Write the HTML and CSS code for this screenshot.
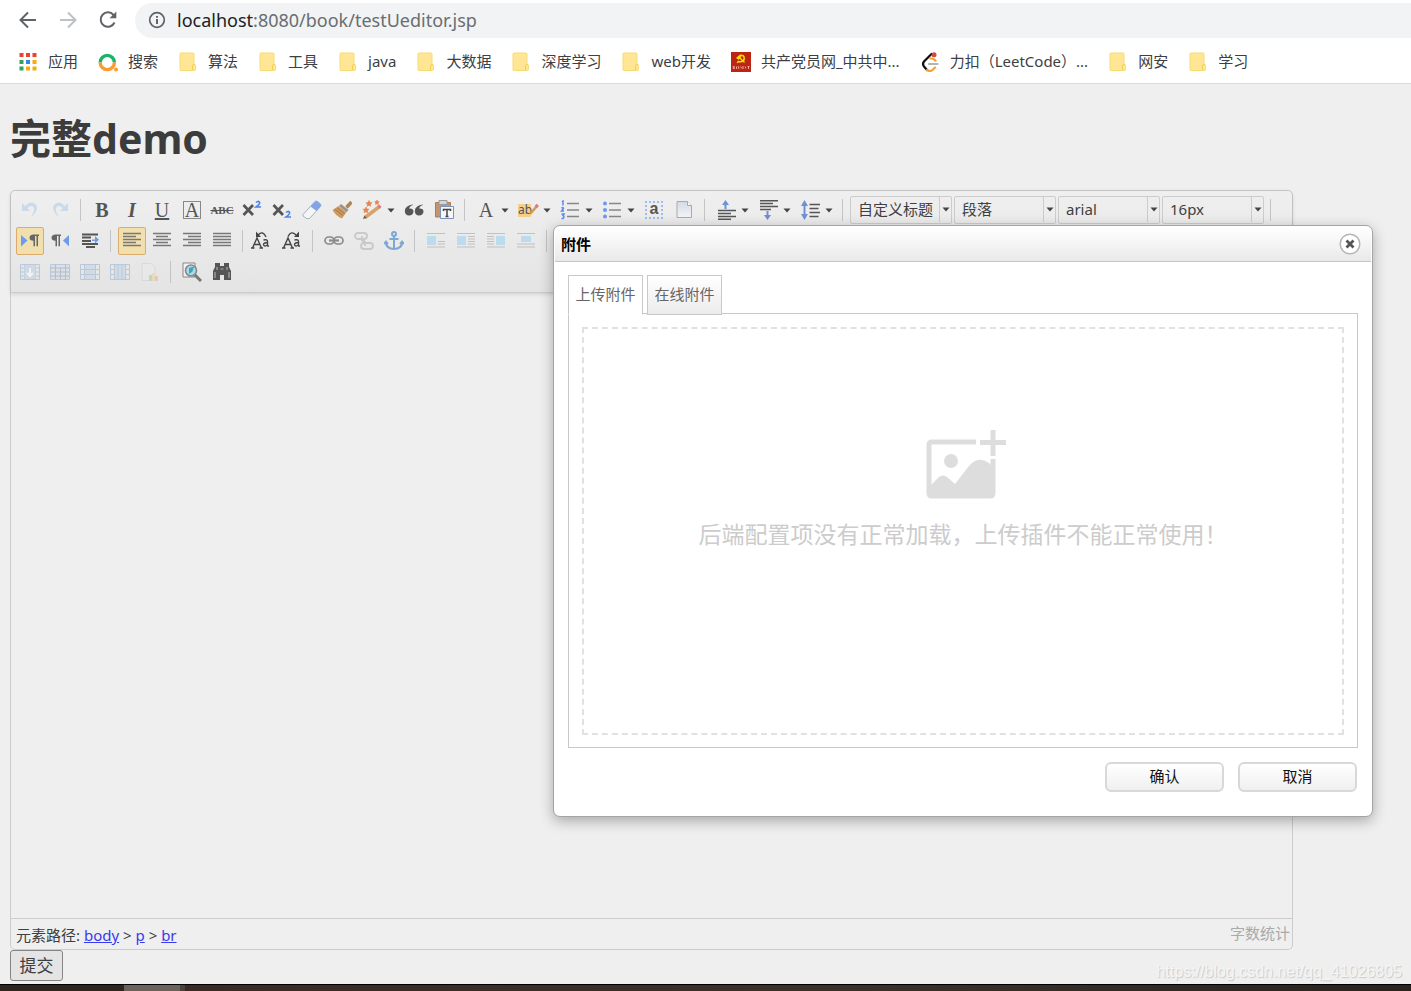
FILE: index.html
```html
<!DOCTYPE html>
<html lang="zh-CN">
<head>
<meta charset="utf-8">
<title>完整demo</title>
<link rel="stylesheet" href="styles.css">
</head>
<body>
<svg class="defs" aria-hidden="true">
  <defs>
    <linearGradient id="sheet" x1="0" y1="0" x2="0" y2="1"><stop offset="0" stop-color="#d4dbe6"/><stop offset="1" stop-color="#f3f4f6"/></linearGradient>
  </defs>
  <symbol id="folder" viewBox="0 0 20 20"><path d="M3 1h12q1 0 1 1v10.500h.5q1 0 1 1v4q0 1-1 1H3q-1 0-1-1V2q0-1 1-1z" fill="#ffe694" stroke="#f7db74"/><path d="M14.500 18v-4q0-1.500 1.200-1.500h1.300" fill="none" stroke="#f3cf55"/></symbol>
  <symbol id="arrow" viewBox="0 0 8 5"><path d="M.5.5h7L4 4.500z" fill="#444"/></symbol>
</svg>

<header class="browser">
  <div class="address-row">
    <button class="nav" aria-label="后退"><svg width="20" height="20" viewBox="0 0 20 20" fill="none" stroke="#5f6368" stroke-width="2"><path d="M18 10H3M10 2.500L2.500 10l7.500 7.500"/></svg></button>
    <button class="nav" aria-label="前进"><svg width="20" height="20" viewBox="0 0 20 20" fill="none" stroke="#bdc0c4" stroke-width="2"><path d="M2 10h15M10 2.500l7.500 7.500-7.500 7.500"/></svg></button>
    <button class="nav" aria-label="刷新"><svg width="20" height="20" viewBox="0 0 20 20" fill="none" stroke="#5f6368" stroke-width="2"><path d="M16.500 12.500A7.200 7.200 0 1 1 15.500 5"/><path d="M18.300 1.500v6.800h-6.800z" fill="#5f6368" stroke="none"/></svg></button>
    <div class="omnibox">
      <svg width="18" height="18" viewBox="0 0 18 18" fill="none" stroke="#5f6368" stroke-width="1.700"><circle cx="9" cy="9" r="7.300"/><path d="M9 8v5M9 5v1.800" stroke-width="2"/></svg>
      <span class="url"><span class="host">localhost</span>:8080/book/testUeditor.jsp</span>
    </div>
  </div>
  <nav class="bookmarks">
    <a href="#"><svg class="bm" viewBox="0 0 20 20"><path d="M1.500 1h4v4h-4zM8 1h4v4H8zM14.500 1h4v4h-4z" fill="#ea4335"/><path d="M1.500 8h4v4h-4zM1.500 14.500h4v4h-4z" fill="#34a35a"/><path d="M8 8h4v4H8z" fill="#2f86f0"/><path d="M14.500 8h4v4h-4zM14.500 14.500h4v4h-4zM8 14.500h4v4H8z" fill="#fbab07"/></svg><span>应用</span></a>
    <a href="#"><svg class="bm" viewBox="0 0 20 20" fill="none" stroke-width="3.400"><path d="M2.200 10.500a7.100 7.100 0 0 1 14.200 0" stroke="#19b36b"/><path d="M2.200 10.500a7.100 7.100 0 0 0 14.200 0" stroke="#ff9a2e"/><circle cx="18" cy="17.500" r="2" fill="#ff9a2e" stroke="none"/></svg><span>搜索</span></a>
    <a href="#"><svg class="bm"><use href="#folder"/></svg><span>算法</span></a>
    <a href="#"><svg class="bm"><use href="#folder"/></svg><span>工具</span></a>
    <a href="#"><svg class="bm"><use href="#folder"/></svg><span>java</span></a>
    <a href="#"><svg class="bm"><use href="#folder"/></svg><span>大数据</span></a>
    <a href="#"><svg class="bm"><use href="#folder"/></svg><span>深度学习</span></a>
    <a href="#"><svg class="bm"><use href="#folder"/></svg><span>web开发</span></a>
    <a href="#"><svg class="bm" viewBox="0 0 20 20"><path d="M0 0h20v20H0z" fill="#bd2413"/><path d="M9 3.200q4.500-.5 4.200 3.800Q12.500 10.500 7 9.500" fill="none" stroke="#ffe100" stroke-width="1.500"/><path d="M6 6l2.700-2.500 1 1L7.500 7zM8.500 5.500l5 5M6 10.800L8 9" fill="#ffe100" stroke="#ffe100" stroke-width="1.200"/><path d="M2 14l1.500 3M3.500 14L2 17M5.500 14.500v2.500M7 14l1 3M9.500 14.500l1.500 2M12 14v3M14 14.500l1 2M16.500 14.500h2M17.500 14v3" stroke="#f2b9ae" stroke-width=".9"/></svg><span>共产党员网_中共中...</span></a>
    <a href="#"><svg class="bm" viewBox="0 0 20 20" fill="none" stroke-linecap="round" stroke-width="2.200"><path d="M11.500 2L4 9.500q-2 2.500 0 5L7 18" stroke="#111"/><path d="M10.500 6.500l2.500.2 2.500 2M7 18q3 2 5.500 0l2.500-2.500" stroke="#f5a030"/><path d="M9 12h8.500" stroke="#b3b3b3"/><circle cx="14" cy="2.800" r="2.500" fill="#d74545" stroke="none"/></svg><span>力扣（LeetCode）...</span></a>
    <a href="#"><svg class="bm"><use href="#folder"/></svg><span>网安</span></a>
    <a href="#"><svg class="bm"><use href="#folder"/></svg><span>学习</span></a>
  </nav>
</header>

<main class="page">
  <h1>完整demo</h1>
  <section class="editor">
    <div class="toolbar">
      <div class="tools">
        <button class="tool off" aria-label="撤销"><svg viewBox="0 0 20 20"><path d="M2 3v8h8L7.300 8.300q3.500-3.500 6-1.500 2.500 3-2.500 10.500Q18.500 11 16.500 5.500 12-.5 5 6z" fill="#a8c9e6"/></svg></button>
        <button class="tool off" aria-label="重做"><svg viewBox="0 0 20 20"><path d="M18 3v8h-8l2.700-2.700q-3.500-3.500-6-1.500-2.500 3 2.500 10.500Q1.500 11 3.500 5.500 8-.5 15 6z" fill="#a8c9e6"/></svg></button>
        <span class="sep"></span>
        <button class="tool serif bold" aria-label="加粗">B</button>
        <button class="tool serif bold italic" aria-label="斜体">I</button>
        <button class="tool serif under" aria-label="下划线">U</button>
        <button class="tool serif" aria-label="字符边框"><span class="boxed">A</span></button>
        <button class="tool serif strike" aria-label="删除线">ABC</button>
        <button class="tool" aria-label="上标"><svg viewBox="0 0 20 20" fill="none"><path d="M1.500 5l9.500 10M11 5L1.500 15" stroke="#555" stroke-width="2.700"/><path d="M14 2.500q2-2 3.500-.3 1 1.500-3.500 4.800h5" stroke="#4d82e8" stroke-width="1.600"/></svg></button>
        <button class="tool" aria-label="下标"><svg viewBox="0 0 20 20" fill="none"><path d="M1.500 5l9.500 10M11 5L1.500 15" stroke="#555" stroke-width="2.700"/><path d="M14 12.500q2-2 3.500-.3 1 1.500-3.500 4.800h5" stroke="#4d82e8" stroke-width="1.600"/></svg></button>
        <button class="tool" aria-label="清除格式"><svg viewBox="0 0 20 20"><path d="M1 14.500L13 1.500q1-1 2.500 0l3 2.500q1 1 0 2.500L7.500 18.500h-3L1 16z" fill="#f4f5f7" stroke="#aab0ba"/><path d="M8.500 6.500L13 1.500q1-1 2.500 0l3 2.500q1 1 0 2.500L14.500 11z" fill="#7fa5e6"/></svg></button>
        <button class="tool" aria-label="格式刷"><svg viewBox="0 0 20 20"><path d="M19.500 2l-5 5.500" stroke="#b08457" stroke-width="3.500"/><path d="M9 4l7.500 6-2 2L7 6z" fill="#9a9287"/><path d="M6.500 6l8 6-4.500 6.500Q4 16.500.5 10z" fill="#cf9b62"/><path d="M3 9.500l8 6M5 8l7.500 5.500" stroke="#a5713f"/></svg></button>
        <button class="tool split" aria-label="自动排版"><svg viewBox="0 0 20 20"><path d="M3 17.500L17 7" stroke="#d6a368" stroke-width="3.500"/><path d="M15 6l2.500 3 2-2-2-2.500z" fill="#dd7a7e"/><path d="M1 19l1.500-3.500 2 2.500z" fill="#555"/><path d="M7 .5l1 2 2 .3-1.500 1.500.3 2L7 5.300l-2 1 .4-2L4 2.800l2-.3zM15 0l.7 1.500 1.600.2-1.200 1.200.3 1.600-1.400-.7-1.500.7.3-1.600-1.100-1.200 1.600-.2zM4 7l1 2 2 .3-1.500 1.500.3 2L4 11.800l-2 1 .4-2L1 9.300 3 9z" fill="#e8824e" stroke="#e8824e" stroke-width=".6"/></svg><svg class="caret"><use href="#arrow"/></svg></button>
        <button class="tool" aria-label="引用"><svg viewBox="0 0 20 20" fill="#555"><path d="M9 5Q5.500 6 5.200 8.500 9.500 8.300 9.500 11.800 9 15.500 5 15.500 1 15.300.8 11 1 5.500 9 4.500zM19 5q-3.500 1-3.800 3.500 4.300-.2 4.300 3.300-.5 3.700-4.500 3.700-4-.2-4.200-4.500.2-5.500 8.200-6.500z"/></svg></button>
        <button class="tool" aria-label="纯文本粘贴模式"><svg viewBox="0 0 20 20"><path d="M1.500 2.500h15V17h-15z" fill="#c4946e" stroke="#a87e5c"/><path d="M5 .5h8v4H5z" fill="#d5d5d5" stroke="#999"/><path d="M6.500 6.500h13v12h-13z" fill="#f5f6f9" stroke="#7d92ba"/><path d="M9.500 11V9.500h7V11M13 9.500v7M11.500 16.500h3" fill="none" stroke="#444" stroke-width="1.500"/></svg></button>
        <span class="sep"></span>
        <button class="tool split serif" aria-label="字体颜色"><span>A</span><svg class="caret"><use href="#arrow"/></svg></button>
        <button class="tool split" aria-label="背景色"><span class="mark">ab<svg viewBox="0 0 10 16"><path d="M1 12L8 4" stroke="#d29a52" stroke-width="2.500"/><path d="M6.500 3l2.500 2" stroke="#dd7a7e" stroke-width="3"/></svg></span><svg class="caret"><use href="#arrow"/></svg></button>
        <button class="tool split" aria-label="有序列表"><svg viewBox="0 0 20 20" fill="none"><path d="M7 3.500h12M7 10h12M7 16.500h12" stroke="#888" stroke-width="1.300"/><path d="M2 2l1-1v4.500M1.500 8q2-1 2 .5L1.500 11H4M1.500 14H4l-1 1.500q2 1 0 3H1.500" stroke="#5b8af0" stroke-width="1.500"/></svg><svg class="caret"><use href="#arrow"/></svg></button>
        <button class="tool split" aria-label="无序列表"><svg viewBox="0 0 20 20"><path d="M7 3.500h12M7 10h12M7 16.500h12" stroke="#888" stroke-width="1.300"/><g fill="#6f98f0"><circle cx="3" cy="3.500" r="2"/><circle cx="3" cy="10" r="2"/><circle cx="3" cy="16.500" r="2"/></g></svg><svg class="caret"><use href="#arrow"/></svg></button>
        <button class="tool" aria-label="全选"><span class="all">a</span></button>
        <button class="tool" aria-label="清空文档"><svg viewBox="0 0 20 20"><path d="M3 1.500h10.500l4 4v12H3z" fill="url(#sheet)" stroke="#aaa"/><path d="M13.500 1.500v4h4" fill="#fff" stroke="#aaa"/></svg></button>
        <span class="sep"></span>
        <button class="tool split" aria-label="段前距"><svg viewBox="0 0 20 20"><path d="M2 10.500h18M2 13.500h13M2 16.500h18M2 19.300h13" stroke="#555" stroke-width="1.400"/><path d="M8.500 9V5H6l3.500-5L13 5h-2.500v4z" fill="#6d91d4"/></svg><svg class="caret"><use href="#arrow"/></svg></button>
        <button class="tool split" aria-label="段后距"><svg viewBox="0 0 20 20"><path d="M2 .700h18M2 3.500h13M2 6.500h18M2 9.500h11" stroke="#555" stroke-width="1.400"/><path d="M8.500 11v4H6l3.500 5 3.500-5h-2.500v-4z" fill="#6d91d4"/></svg><svg class="caret"><use href="#arrow"/></svg></button>
        <button class="tool split" aria-label="行间距"><svg viewBox="0 0 20 20"><path d="M9.500 4.500h10.500M9.500 8.500h9M9.500 12.500h10.500M9.500 16.500h9" stroke="#555" stroke-width="1.400"/><path d="M4.500 0L8 6H5.500v8H8l-3.500 6L1 14h2.500V6H1z" fill="#6d91d4"/></svg><svg class="caret"><use href="#arrow"/></svg></button>
        <span class="sep"></span>
        <label class="combo"><select aria-label="自定义标题"><option>自定义标题</option></select><span class="drop"><svg class="caret"><use href="#arrow"/></svg></span></label>
        <label class="combo"><select aria-label="段落格式"><option>段落</option></select><span class="drop"><svg class="caret"><use href="#arrow"/></svg></span></label>
        <label class="combo"><select aria-label="字体"><option>arial</option></select><span class="drop"><svg class="caret"><use href="#arrow"/></svg></span></label>
        <label class="combo"><select aria-label="字号"><option>16px</option></select><span class="drop"><svg class="caret"><use href="#arrow"/></svg></span></label>
        <span class="sep"></span>
      </div>
      <div class="tools">
        <button class="tool active" aria-label="从左向右输入"><svg viewBox="0 0 20 20"><path d="M1 4l6.500 5.500L1 15.500z" fill="#6f9bec"/><path d="M19 3.500h-5.500q-4 .3-4 3.200t4 3v5.500h1.500V5h1.500v10.200H18V5h1z" fill="#666"/></svg></button>
        <button class="tool" aria-label="从右向左输入"><svg viewBox="0 0 20 20"><path d="M19 4l-6 5.500 6 6z" fill="#6f9bec"/><path d="M11 3.500H5.500q-4 .3-4 3.200t4 3v5.500H7V5h1.500v10.200H10V5h1z" fill="#666"/></svg></button>
        <button class="tool" aria-label="首行缩进"><svg viewBox="0 0 20 20"><path d="M2 3.500h16M2 6.500h9M2 10h9M2 13h16M6 16h9" stroke="#555" stroke-width="1.800"/><path d="M12 8.500h3V5l4 3.800-4 3.700V10h-3z" fill="#6f9bec"/></svg></button>
        <span class="sep"></span>
        <button class="tool active" aria-label="居左对齐"><svg viewBox="0 0 20 20"><path d="M1 2.500h18M1 5.500h13M1 8.500h18M1 11.500h13M1 14.500h18" stroke="#777" stroke-width="1.300"/></svg></button>
        <button class="tool" aria-label="居中对齐"><svg viewBox="0 0 20 20"><path d="M1 2.500h18M4 5.500h12M1 8.500h18M4 11.500h12M1 14.500h18" stroke="#777" stroke-width="1.300"/></svg></button>
        <button class="tool" aria-label="居右对齐"><svg viewBox="0 0 20 20"><path d="M1 2.500h18M6 5.500h13M1 8.500h18M6 11.500h13M1 14.500h18" stroke="#777" stroke-width="1.300"/></svg></button>
        <button class="tool" aria-label="两端对齐"><svg viewBox="0 0 20 20"><path d="M1 2.500h18M1 5.500h18M1 8.500h18M1 11.500h18M1 14.500h18" stroke="#777" stroke-width="1.300"/></svg></button>
        <span class="sep tight"></span>
        <button class="tool case" aria-label="字母大写"><svg viewBox="0 0 20 20" fill="none" stroke="#444" stroke-width="1.400"><path d="M1.500 17L6 7l4.500 10M3.500 13.500h5M0 17h3.500M8.500 17h3.500M12.500 9q4-1 4 1.500v4q0 .7 1.500.5M16.500 11.500q-4 0-4 2.200 1 2.500 4 .3M7 4q5-5 8 2"/><path d="M5 .5V6h5z" fill="#444" stroke="none"/></svg></button>
        <button class="tool case" aria-label="字母小写"><svg viewBox="0 0 20 20" fill="none" stroke="#444" stroke-width="1.400"><path d="M1.500 17L6 7l4.500 10M3.500 13.500h5M0 17h3.500M8.500 17h3.500M12.500 9q4-1 4 1.500v4q0 .7 1.500.5M16.500 11.500q-4 0-4 2.200 1 2.500 4 .3M6 5.500q3-6.500 8-1.500"/><path d="M17 .5V6h-5z" fill="#444" stroke="none"/></svg></button>
        <span class="sep"></span>
        <button class="tool" aria-label="超链接"><svg viewBox="0 0 20 20" fill="none" stroke="#8b8b8b" stroke-width="1.700"><rect x="1" y="6" width="9" height="7" rx="3.500"/><rect x="10" y="6" width="9" height="7" rx="3.500"/><path d="M5 9.500h10" stroke-width="2.200"/></svg></button>
        <button class="tool off" aria-label="取消链接"><svg viewBox="0 0 20 20" fill="none" stroke="#aaa" stroke-width="1.800"><rect x="1" y="2" width="12" height="6" rx="3"/><rect x="7" y="12" width="12" height="6" rx="3"/><path d="M8 5v4h3M11 15v-4H8"/></svg></button>
        <button class="tool" aria-label="锚点"><svg viewBox="0 0 20 20" fill="none" stroke="#7ea7d6" stroke-width="2"><circle cx="10" cy="3" r="2"/><path d="M10 5v13M5.500 8h9M1.500 11q1 7 8.500 7t8.500-7M0 13l2-2.500L4 13M16 13l2-2.500 2 2.500"/></svg></button>
        <span class="sep"></span>
        <button class="tool off" aria-label="默认"><svg viewBox="0 0 20 20"><path d="M1 2.500h18M12 10.500h7M12 13h7M1 16h18" stroke="#999" stroke-width="1.200"/><path d="M1 5h9v9H1z" fill="#8ed0f0"/></svg></button>
        <button class="tool off" aria-label="左浮动"><svg viewBox="0 0 20 20"><path d="M1 2.500h18M12 5.500h7M12 8h7M12 10.500h7M12 13h7M1 16h18" stroke="#999" stroke-width="1.200"/><path d="M1 5h9v9H1z" fill="#8ed0f0"/></svg></button>
        <button class="tool off" aria-label="右浮动"><svg viewBox="0 0 20 20"><path d="M1 2.500h18M1 5.500h7M1 8h7M1 10.500h7M1 13h7M1 16h18" stroke="#999" stroke-width="1.200"/><path d="M10 5h9v9h-9z" fill="#8ed0f0"/></svg></button>
        <button class="tool off" aria-label="居中"><svg viewBox="0 0 20 20"><path d="M1 2.500h18M1 13h18M1 16h18" stroke="#999" stroke-width="1.200"/><path d="M5 5h10v6H5z" fill="#8ed0f0"/></svg></button>
        <span class="sep"></span>
      </div>
      <div class="tools">
        <button class="tool off" aria-label="插入表格"><svg viewBox="0 0 20 20" fill="none" stroke="#8faccd"><path d="M.5 2.500h19v15H.5zM4.500 2.500v15M15.500 2.500v15M.5 6h4M.5 10h4M.5 14h4M15.500 6h4M15.500 10h4M15.500 14h4"/><path d="M4.500 3h11v14h-11z" fill="#b8cee5" stroke="none"/><path d="M10 6v8M7 11l3 3 3-3" stroke="#fff" stroke-width="2"/></svg></button>
        <button class="tool off" aria-label="合并单元格"><svg viewBox="0 0 20 20" fill="none" stroke="#8faccd"><path d="M.5 2.500h19v15H.5z" fill="#cddceb"/><path d="M5.500 2.500v15M10.500 6v11M15.500 2.500v15M.5 6h19M.5 10h19M.5 14h19" stroke="#8e8ead"/></svg></button>
        <button class="tool off" aria-label="拆分成行"><svg viewBox="0 0 20 20" fill="none" stroke="#8faccd"><path d="M4 3h12v14H4z" fill="#bed2e7" stroke="none"/><path d="M.5 2.500h19v15H.5zM4.500 2.500v15M15.500 2.500v15M.5 7.500h19M.5 12.500h19"/></svg></button>
        <button class="tool off" aria-label="拆分成列"><svg viewBox="0 0 20 20" fill="none" stroke="#8faccd"><path d="M4 3h12v14H4z" fill="#bed2e7" stroke="none"/><path d="M.5 2.500h19v15H.5zM4.500 2.500v15M8 2.500v15M12 2.500v15M15.500 2.500v15M.5 7.500h4M.5 12.500h4M15.500 7.500h4M15.500 12.500h4"/></svg></button>
        <button class="tool faint" aria-label="图表"><svg viewBox="0 0 20 20"><path d="M2 1.500h9l4 4v13H2z" fill="#eee" stroke="#bbb"/><path d="M9 13h3v6H9z" fill="#6db56a"/><path d="M12 11h3v8h-3z" fill="#e6c55a"/><path d="M15 14h3v5h-3z" fill="#e08b57"/></svg></button>
        <span class="sep"></span>
        <button class="tool" aria-label="预览"><svg viewBox="0 0 20 20"><path d="M1 1h12v14H1z" fill="#f2f2f2" stroke="#888"/><circle cx="9" cy="8.500" r="5.500" fill="#a7dce9" stroke="#888" stroke-width="1.600"/><path d="M7 6l5-1.500-1.500 5L7 12z" fill="#4b9fbb"/><path d="M13 13l6 6" stroke="#777" stroke-width="3"/></svg></button>
        <button class="tool" aria-label="查询替换"><svg viewBox="0 0 20 20" fill="#555"><path d="M3 1h5v3h4V1h5v4l2 4v9h-7v-5H8v5H1V9l2-4z"/><path d="M3 10v6M17 10v6M5 5v3M15 5v3M8.500 7h3" stroke="#aaa" stroke-width="1.200"/></svg></button>
      </div>
    </div>
    <div class="canvas" contenteditable="true" aria-label="编辑区"></div>
    <footer class="status">
      <div class="path">元素路径: <a href="#">body</a> &gt; <a href="#">p</a> &gt; <a href="#">br</a></div>
      <div class="count">字数统计</div>
    </footer>
  </section>
  <button class="submit">提交</button>
</main>
<div class="watermark">https://blog.csdn.net/qq_41026805</div>
<div class="taskbar"></div>

<div class="dialog" role="dialog" aria-labelledby="dialog-title">
  <div class="dialog-head">
    <h2 id="dialog-title">附件</h2>
    <button class="close" aria-label="关闭"><svg width="22" height="22" viewBox="0 0 22 22"><circle cx="11" cy="11" r="9.800" fill="#fff" stroke="#b5b5b5" stroke-width="1.500"/><path d="M7.500 7.500l7 7M14.500 7.500l-7 7" stroke="#555" stroke-width="2.800"/></svg></button>
  </div>
  <div class="dialog-body">
    <div class="tabs" role="tablist">
      <button class="tab selected" role="tab" aria-selected="true">上传附件</button>
      <button class="tab" role="tab" aria-selected="false">在线附件</button>
    </div>
    <div class="panel">
      <div class="dropzone">
        <svg width="86" height="70" viewBox="-6 0 86 70"><path d="M50 12H6q-3 0-3 3v48q0 3 3 3h58q3 0 3-3V29" fill="none" stroke="#ddd" stroke-width="5"/><path d="M3 57L13 47q4-3 8 0l8 7L43 36q9-11 20-3l4 5v28H3z" fill="#ddd"/><circle cx="25" cy="31" r="7" fill="#ddd"/><path d="M54 12.500h26M67 0v26" stroke="#ddd" stroke-width="5"/></svg>
        <p>后端配置项没有正常加载，上传插件不能正常使用！</p>
      </div>
    </div>
    <div class="actions">
      <button class="action">确认</button>
      <button class="action">取消</button>
    </div>
  </div>
</div>
</body>
</html>
```
FILE: styles.css
```css
* { box-sizing: border-box; }
body {
  margin: 0;
  min-height: 100vh;
  display: flex;
  flex-direction: column;
  position: relative;
  background: #efefef;
  color: #3f3f3f;
  font: 15px/20px "Noto Sans", "Noto Sans CJK SC", sans-serif;
}
button, select { font: inherit; color: inherit; }
button { padding: 0; border: 0; background: none; }
svg { display: block; flex: none; }
.defs { position: absolute; width: 0; height: 0; }

.browser { background: #fff; border-bottom: 1px solid #d9dbda; }
.address-row { display: flex; align-items: center; height: 40px; padding-left: 18px; gap: 20px; }
.nav { flex: none; width: 20px; height: 20px; }
.omnibox {
  flex: 1;
  display: flex;
  align-items: center;
  gap: 11px;
  height: 35px;
  margin-left: -3px;
  padding-left: 13px;
  border-radius: 18px 0 0 18px;
  background: #f1f3f4;
}
.url { font-size: 18px; line-height: 24px; color: #6a6d71; }
.host { color: #202124; }
.bookmarks { display: flex; align-items: center; gap: 20px; height: 43px; padding-left: 18px; }
.bookmarks a { display: flex; align-items: center; gap: 10px; color: #3c4043; text-decoration: none; white-space: nowrap; }
.bookmarks span { padding-bottom: 2px; }
.bm { width: 20px; height: 20px; }

.page { flex: 1; padding: 0 10px; }
h1 { margin: 24px 0 22px; font-size: 41px; line-height: 60px; color: #3c3c3c; }
.editor { max-width: 1283px; border: 1px solid #ccc; border-radius: 5px; }
.toolbar {
  display: flex;
  flex-direction: column;
  gap: 3px;
  padding: 5px 5px 6px;
  border-bottom: 1px solid #ccc;
  border-radius: 5px 5px 0 0;
  background: linear-gradient(#efefef, #e4e4e4);
  box-shadow: 0 1px 4px rgba(0, 0, 0, 0.15);
}
.tools { display: flex; align-items: center; gap: 2px; height: 28px; }
.tool {
  flex: none;
  display: flex;
  align-items: center;
  justify-content: center;
  width: 28px;
  height: 28px;
  border-radius: 2px;
  color: #555;
}
.tool > svg { width: 20px; height: 20px; }
.tool.case { width: 29px; }
.tool.off { opacity: 0.5; }
.tool.faint { opacity: 0.3; }
.tool.active { border: 1px solid #dcac6c; background: #f1dfad; }
.tool.split { width: 40px; padding-left: 4px; gap: 5px; justify-content: flex-start; }
.tool .caret, .caret { width: 8px; height: 5px; }
.tool.split > span { width: 20px; text-align: center; }
.serif { font: 20px/20px "Liberation Serif", serif; }
.bold { font-weight: bold; }
.italic { font-style: italic; }
.under { text-decoration: underline; }
.strike { font-size: 11px; font-weight: bold; text-decoration: line-through; }
.boxed { width: 18px; height: 18px; border: 1px solid #888; line-height: 16px; }
.tool.split > .mark {
  display: flex;
  align-items: center;
  height: 13px;
  background: linear-gradient(#f3cf8c, #f3cf8c) 0 0 / 13px 100% no-repeat;
  font-size: 12px;
  line-height: 12px;
}
.mark svg { width: 10px; height: 16px; margin-left: -3px; }
.all { width: 18px; height: 18px; border: 2px dotted #9dbcf0; font: bold 16px/12px "Liberation Sans", sans-serif; }
.sep { flex: none; width: 10px; height: 22px; background: linear-gradient(#c4c4c8, #c4c4c8) 4px 0 / 1px 100% no-repeat; }
.sep.tight { width: 6px; }
.combo { display: grid; grid-template-columns: 1fr 12px; width: 102px; height: 28px; border: 1px solid #ccc; border-radius: 2px; }
.combo select {
  grid-area: 1 / 1 / 2 / 3;
  appearance: none;
  min-width: 0;
  padding: 0 0 2px 7px;
  border: 0;
  background: none;
}
.drop { grid-area: 1 / 2; display: grid; place-items: center; margin-bottom: 1px; border-left: 1px solid #ccc; pointer-events: none; }
.canvas { height: 625px; outline: 0; }
.status { display: flex; justify-content: space-between; height: 31px; padding: 0 2px 0 5px; border-top: 1px solid #ccc; line-height: 32px; }
.status a { color: #3a3af0; }
.count { color: #aaa; line-height: 28px; }
.submit { display: block; width: 53px; height: 31px; border: 1px solid #858585; border-radius: 3px; background: #e4e4e4; font-size: 17px; }
.watermark {
  position: absolute;
  right: 9px;
  bottom: 9px;
  color: #f5f5f5;
  font: 16px/20px "Liberation Sans", sans-serif;
  text-shadow: 1px 1px 1px #c8c8c8;
}
.taskbar {
  height: 7px;
  border-top: 1px solid #000;
  background: linear-gradient(90deg, #2e261e 0 124px, #6b625c 124px 180px, #4a413b 180px 185px, #3a2a26 185px, #3a322a 60%, #2b231e);
}

.dialog {
  position: absolute;
  top: 225px;
  left: 553px;
  width: 820px;
  padding: 1px;
  border: 1px solid #a4a4a4;
  border-radius: 7px;
  background: #fff;
  box-shadow: 0 4px 14px rgba(0, 0, 0, 0.3);
}
.dialog-head {
  display: flex;
  align-items: center;
  justify-content: space-between;
  height: 35px;
  padding: 0 10px 0 6px;
  border-bottom: 1px solid #c6c6c6;
  border-radius: 5px 5px 0 0;
  background: linear-gradient(#fff, #e9e9e9);
}
h2 { margin: 0; font-size: 15px; line-height: 20px; color: #000; }
.dialog-body { padding: 13px; }
.tabs { display: flex; gap: 4px; }
.tab { width: 75px; height: 40px; padding-bottom: 2px; border: 1px solid #c9c9c9; background: linear-gradient(#fff, #ececec); color: #666; z-index: 0; }
.tab.selected { border-bottom-color: #fff; background: #fff; z-index: 1; }
.panel { margin-top: -2px; padding: 13px 13px 12px; border: 1px solid #c9c9c9; }
.dropzone {
  display: flex;
  flex-direction: column;
  align-items: center;
  height: 408px;
  padding-top: 101px;
  border: 2px dashed #e1e1e1;
}
.dropzone p { margin: 18px 0 0; font-size: 23px; line-height: 32px; color: #ccc; white-space: nowrap; }
.actions { display: flex; justify-content: flex-end; gap: 14px; padding: 14px 1px 10px 0; }
.action { width: 119px; height: 30px; padding-bottom: 2px; border: 2px solid #d8d8d8; border-radius: 6px; background: linear-gradient(#fff, #f0f0f0); color: #111; }
```
